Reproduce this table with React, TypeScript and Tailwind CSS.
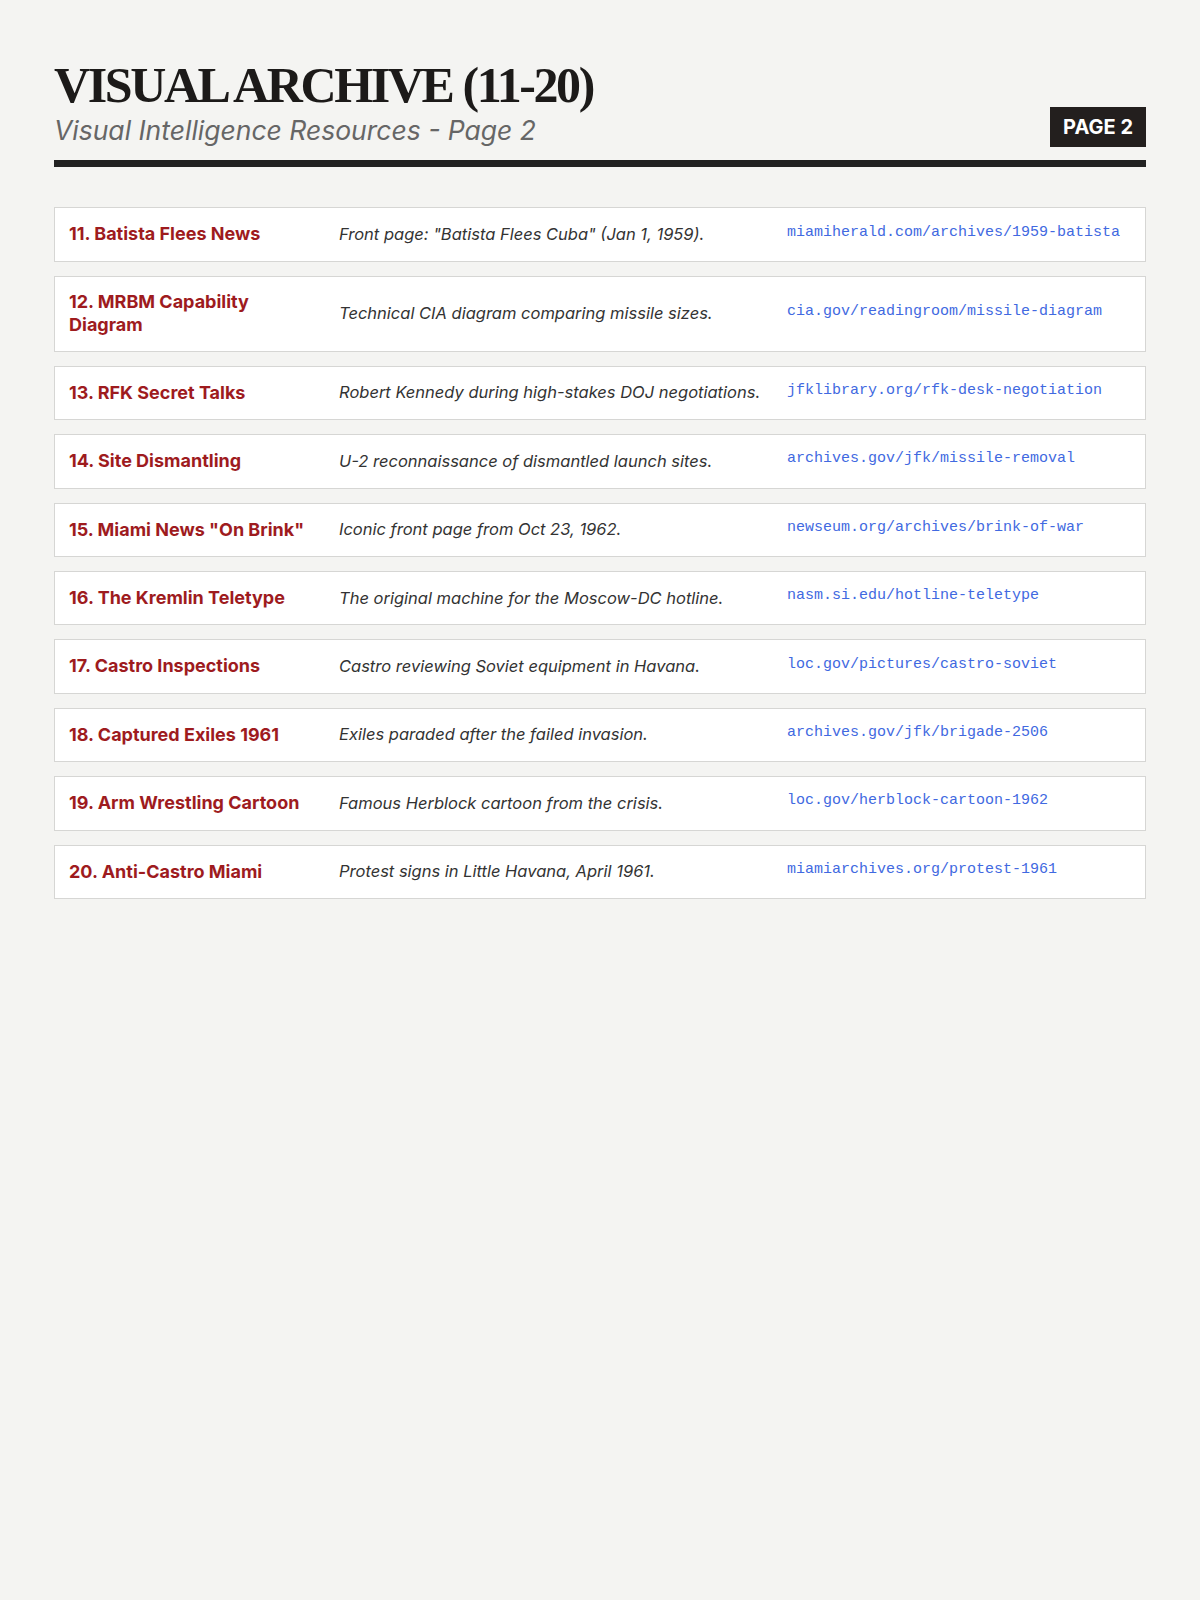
import React from "react";

const rows = [
  { t: "11. Batista Flees News", d: 'Front page: "Batista Flees Cuba" (Jan 1, 1959).', u: "miamiherald.com/archives/1959-batista" },
  { t: "12. MRBM Capability Diagram", d: "Technical CIA diagram comparing missile sizes.", u: "cia.gov/readingroom/missile-diagram" },
  { t: "13. RFK Secret Talks", d: "Robert Kennedy during high-stakes DOJ negotiations.", u: "jfklibrary.org/rfk-desk-negotiation" },
  { t: "14. Site Dismantling", d: "U-2 reconnaissance of dismantled launch sites.", u: "archives.gov/jfk/missile-removal" },
  { t: '15. Miami News "On Brink"', d: "Iconic front page from Oct 23, 1962.", u: "newseum.org/archives/brink-of-war" },
  { t: "16. The Kremlin Teletype", d: "The original machine for the Moscow-DC hotline.", u: "nasm.si.edu/hotline-teletype" },
  { t: "17. Castro Inspections", d: "Castro reviewing Soviet equipment in Havana.", u: "loc.gov/pictures/castro-soviet" },
  { t: "18. Captured Exiles 1961", d: "Exiles paraded after the failed invasion.", u: "archives.gov/jfk/brigade-2506" },
  { t: "19. Arm Wrestling Cartoon", d: "Famous Herblock cartoon from the crisis.", u: "loc.gov/herblock-cartoon-1962" },
  { t: "20. Anti-Castro Miami", d: "Protest signs in Little Havana, April 1961.", u: "miamiarchives.org/protest-1961" },
];

export default function App() {
  return (
    <div className="min-h-[1600px] bg-[#f4f4f2] px-[54px] pt-[58px] font-['Inter',sans-serif]">
      <header className="flex items-end justify-between border-b-[7px] border-[#222222] pb-[13px]">
        <div>
          <h1 className="font-['Liberation_Serif',serif] text-[50px] font-bold leading-[1.1] tracking-[-2.4px] text-[#1c1a19]">
            VISUAL ARCHIVE (11-20)
          </h1>
          <p className="text-[26.5px] italic leading-[1.3] text-[#666666]">Visual Intelligence Resources - Page 2</p>
        </div>
        <div className="bg-[#231f1e] px-[13px] py-[8px] text-[20px] font-bold leading-[24px] text-white">PAGE 2</div>
      </header>

      <div className="mt-[40px] flex flex-col gap-[14px]">
        {rows.map((r) => (
          <div
            key={r.t}
            className="grid grid-cols-[250px_428px_1fr] items-center gap-[20px] border border-[#d6d6d4] bg-white px-[14px] py-[14.5px]"
          >
            <div className="text-[18px] font-bold leading-[22.5px] text-[#9e1b1e]">{r.t}</div>
            <div className="text-[16.5px] italic leading-[23.4px] text-[#333333]">{r.d}</div>
            <div className="mb-[4px] font-['Liberation_Mono',monospace] text-[15px] leading-[18px] text-[#4169e1]">{r.u}</div>
          </div>
        ))}
      </div>
    </div>
  );
}
